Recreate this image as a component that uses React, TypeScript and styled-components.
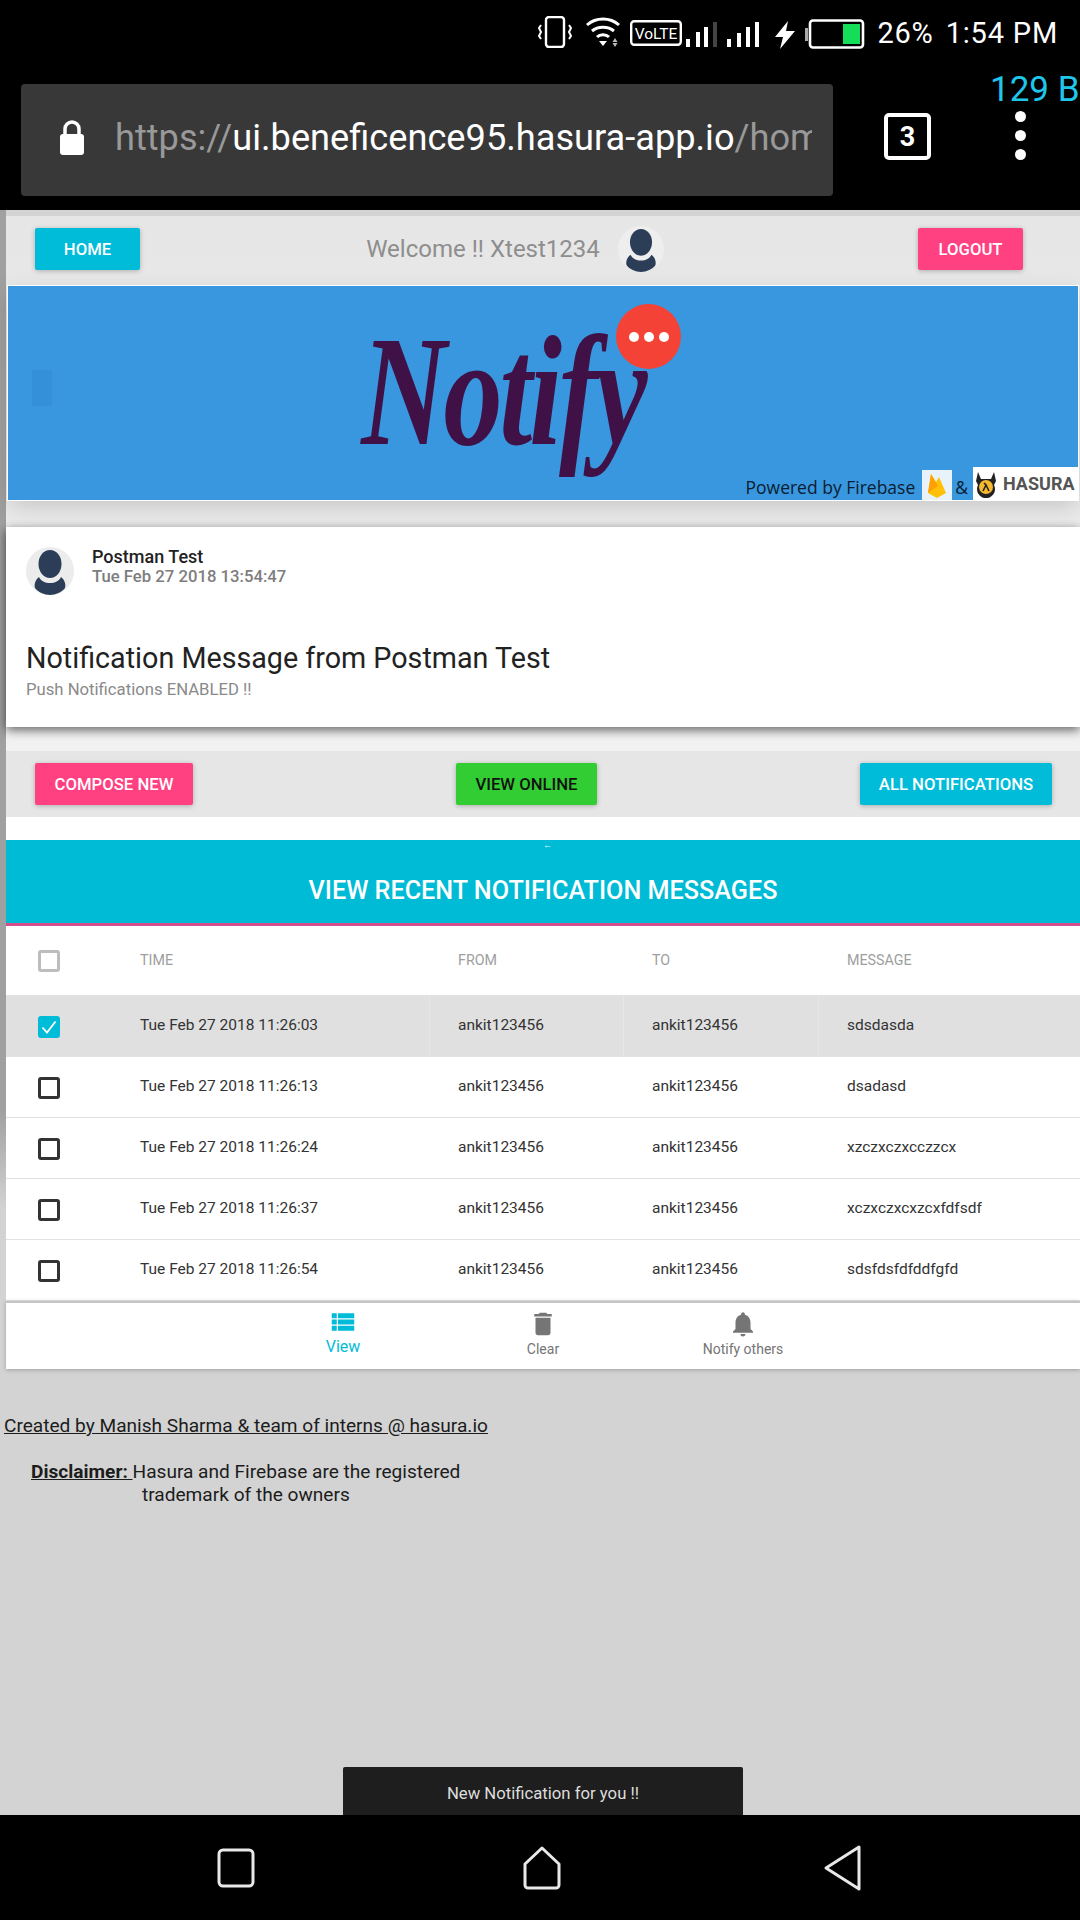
import React from 'react'
import styled, { createGlobalStyle } from 'styled-components'
import { MdDelete, MdNotifications, MdViewList } from 'react-icons/md'

const GlobalStyle = createGlobalStyle`
  html, body {
    margin: 0;
    padding: 0;
    background: #000;
    font-family: Roboto, "Liberation Sans", sans-serif;
  }
  * { box-sizing: border-box; }
`

const Screen = styled.div`
  position: relative;
  width: 1080px;
  height: 1920px;
  display: flex;
  flex-direction: column;
  overflow: hidden;
  background: #000;
`

const StatusBar = styled.div`
  height: 64px;
  padding: 16px 22px 0 0;
  display: flex;
  justify-content: flex-end;
  align-items: flex-start;
  color: #fff;
`

const StatusIcon = styled.svg<{ $ml?: number; $mt?: number }>`
  display: block;
  flex: none;
  margin-left: ${({ $ml }) => $ml ?? 0}px;
  margin-top: ${({ $mt }) => $mt ?? 0}px;
`

const StatusText = styled.span<{ $ml: number }>`
  margin-left: ${({ $ml }) => $ml}px;
  font-size: 29px;
  line-height: 34px;
  letter-spacing: 0.8px;
`

const Toolbar = styled.div`
  position: relative;
  height: 146px;
  padding: 20px 0 0 21px;
  display: flex;
  align-items: flex-start;
`

const UrlBar = styled.div`
  width: 812px;
  height: 112px;
  padding: 0 0 5px 38px;
  display: flex;
  align-items: center;
  gap: 30px;
  background: #383838;
  border-radius: 4px;
  overflow: hidden;
`

const LockIcon = styled.svg`
  display: block;
  flex: none;
`

const UrlText = styled.div`
  font-size: 36.2px;
  white-space: nowrap;
  color: #fff;
  width: 697px;
  overflow: hidden;
`

const UrlDim = styled.span`
  color: #999;
`

const TabCount = styled.div`
  width: 47px;
  height: 47px;
  margin: 29px 0 0 51px;
  border: 4px solid #fff;
  border-radius: 5px;
  display: flex;
  align-items: center;
  justify-content: center;
  color: #fff;
  font-size: 27px;
  font-weight: 700;
`

const MenuDots = styled.div`
  margin: 27px 0 0 84px;
  display: flex;
  flex-direction: column;
  gap: 8px;
`

const MenuDot = styled.span`
  width: 11px;
  height: 11px;
  border-radius: 50%;
  background: #fff;
`

const NetSpeed = styled.div`
  position: absolute;
  left: 990px;
  top: 6px;
  font-size: 35px;
  line-height: 40px;
  color: #1fc6ea;
  white-space: nowrap;
`

const Page = styled.div`
  position: relative;
  flex: 1;
  padding: 6px 0 0 6px;
  background:
    linear-gradient(#a0a0a0 0, #a0a0a0 900px, #d3d3d3 1000px) left top / 6px 100% no-repeat,
    #d3d3d3;
  overflow: hidden;
`

const HeaderArea = styled.div`
  background: linear-gradient(#e6e6e6, #ededed);
  height: 311px;
`

const HeaderRow = styled.div`
  height: 67px;
  padding: 12px 57px 0 29px;
  display: flex;
  align-items: flex-start;
  justify-content: space-between;
`

const Button = styled.div<{ $bg: string; $fg?: string; $w: number }>`
  width: ${({ $w }) => $w}px;
  height: 42px;
  flex: none;
  display: flex;
  align-items: center;
  justify-content: center;
  background: ${({ $bg }) => $bg};
  color: ${({ $fg }) => $fg ?? '#fff'};
  font-size: 16.7px;
  font-weight: 500;
  border-radius: 2px;
  box-shadow: 0 1px 5px rgba(0, 0, 0, 0.25);
`

const Welcome = styled.div`
  display: flex;
  align-items: center;
  gap: 18px;
  margin: -2px 28px 0 0;
  font-size: 24px;
  color: #8e8e8e;
`

const Avatar = styled.svg`
  display: block;
  flex: none;
`

const Banner = styled.div`
  position: relative;
  height: 214px;
  margin: 3px 2px 0;
  padding: 50px 80px 0 0;
  display: flex;
  justify-content: center;
  background: #3897de;
  box-shadow: 0 0 0 1px #fff, 0 8px 22px rgba(0, 0, 0, 0.16);
`

const LogoText = styled.div`
  font-family: "Liberation Serif", serif;
  font-style: italic;
  font-weight: 700;
  font-size: 118px;
  line-height: 140px;
  letter-spacing: -3px;
  color: #3f1147;
  transform: translateY(-10px) scaleY(1.32);
`

const LogoBubble = styled.div`
  position: absolute;
  left: 608px;
  top: 18px;
  width: 65px;
  height: 65px;
  display: flex;
  align-items: center;
  justify-content: center;
  gap: 5px;
  border-radius: 50%;
  background: #f44336;
`

const BubbleDot = styled.span`
  width: 10px;
  height: 10px;
  border-radius: 50%;
  background: #fff;
`

const FaintMark = styled.div`
  position: absolute;
  left: 24px;
  top: 84px;
  width: 20px;
  height: 36px;
  background: #3490d8;
`

const Powered = styled.div`
  position: absolute;
  right: 0;
  bottom: 0;
  display: flex;
  align-items: flex-end;
  font-family: "Open Sans", sans-serif;
  font-size: 17.5px;
  line-height: 26px;
  color: #0b1c33;
`

const FirebaseBox = styled.div`
  width: 30px;
  height: 30px;
  margin: 0 3px 0 7px;
  display: flex;
  align-items: center;
  justify-content: center;
  background: #e8f2fa;
`

const HasuraBox = styled.div`
  width: 105px;
  height: 33px;
  margin-left: 5px;
  display: flex;
  align-items: center;
  gap: 5px;
  padding-left: 1px;
  background: #fff;
  color: #555;
  font-family: Roboto, sans-serif;
  font-size: 18px;
  line-height: 33px;
  font-weight: 700;
  svg { flex: none; }
`

const MessageCard = styled.div`
  position: relative;
  height: 200px;
  padding: 20px 20px 0;
  background: #fff;
  box-shadow: 0 3px 10px rgba(0, 0, 0, 0.6);
`

const Sender = styled.div`
  display: flex;
  gap: 18px;
`

const SenderName = styled.div`
  font-size: 18px;
  line-height: 20px;
  font-weight: 500;
  color: #222;
`

const SenderDate = styled.div`
  font-size: 16.7px;
  line-height: 20px;
  font-weight: 500;
  color: #7d7d7d;
`

const MessageTitle = styled.div`
  margin-top: 45px;
  font-size: 28.7px;
  line-height: 36px;
  color: #222;
`

const MessageSub = styled.div`
  margin-top: 5px;
  font-size: 16.7px;
  line-height: 18px;
  color: #8a8a8a;
`

const CardGap = styled.div`
  height: 24px;
  background: #f2f2f2;
`

const ActionBar = styled.div`
  height: 66px;
  padding: 12px 28px 0 29px;
  display: flex;
  justify-content: space-between;
  align-items: flex-start;
  background: #e6e6e6;
`

const WhiteGap = styled.div`
  height: 23px;
  background: #fff;
`

const TableTitle = styled.div`
  position: relative;
  height: 86px;
  padding-top: 17px;
  display: flex;
  align-items: center;
  justify-content: center;
  background: #00bbd5;
  border-bottom: 3px solid #d64d8e;
  color: #fff;
  font-size: 25.2px;
  font-weight: 500;
`

const TinyArrow = styled.span`
  position: absolute;
  left: 537px;
  top: 0;
  font-size: 9px;
  line-height: 10px;
  color: #e6f9fc;
`

const Table = styled.div`
  background: #fff;
`

const Row = styled.div<{ $selected?: boolean; $head?: boolean }>`
  height: ${({ $head }) => ($head ? 70 : 61)}px;
  display: grid;
  grid-template-columns: 105px 318px 194px 195px 1fr;
  align-items: stretch;
  background: ${({ $selected }) => ($selected ? '#e0e0e0' : '#fff')};
  border-bottom: 1px solid #e2e2e2;
  font-size: ${({ $head }) => ($head ? 14.3 : 15.5)}px;
  color: ${({ $head }) => ($head ? '#9e9e9e' : '#333')};
`

const Cell = styled.div<{ $divider?: boolean }>`
  padding: 0 0 2px 28px;
  display: flex;
  align-items: center;
  border-left: 1px solid ${({ $divider }) => ($divider ? '#e6e6e6' : 'transparent')};
  white-space: nowrap;
`

const CheckCell = styled.div`
  padding: 1px 0 0 32px;
  display: flex;
  align-items: center;
`

const Checkbox = styled.div<{ $state: 'dim' | 'on' | 'off' }>`
  width: 22px;
  height: 22px;
  display: flex;
  align-items: center;
  justify-content: center;
  border-radius: 3px;
  border: 3px solid ${({ $state }) => ($state === 'dim' ? '#bdbdbd' : $state === 'on' ? '#00bcd9' : '#333')};
  background: ${({ $state }) => ($state === 'on' ? '#00bcd9' : 'transparent')};
`

const BottomNav = styled.div`
  height: 68px;
  border-top: 2px solid #c4c4c4;
  padding-top: 6px;
  display: flex;
  justify-content: center;
  background: #fff;
  box-shadow: 0 1px 4px rgba(0, 0, 0, 0.25);
`

const NavItem = styled.div<{ $active?: boolean }>`
  width: 200px;
  display: flex;
  flex-direction: column;
  align-items: center;
  color: ${({ $active }) => ($active ? '#00bcd9' : '#757575')};
  font-size: ${({ $active }) => ($active ? 16 : 14)}px;
  line-height: 18px;
`

const NavGlyph = styled.span<{ $active?: boolean }>`
  display: block;
  height: 30px;
  margin: ${({ $active }) => ($active ? '-2px 0 1px' : '0 0 1px')};
  svg { display: block; }
`

const Footer = styled.div`
  margin: 0 0 0 -2px;
  padding-top: 45px;
  font-size: 19.1px;
  line-height: 23px;
  color: #1c1c1c;
`

const Credit = styled.div`
  text-decoration: underline;
`

const Disclaimer = styled.div`
  margin: 23px 0 0 27px;
`

const DisclaimerLabel = styled.span`
  font-weight: 700;
  text-decoration: underline;
`

const DisclaimerRest = styled.div`
  padding-left: 111px;
`

const Toast = styled.div`
  position: absolute;
  left: 343px;
  bottom: 0;
  width: 400px;
  height: 48px;
  padding-top: 4px;
  display: flex;
  align-items: center;
  justify-content: center;
  background: #1e1e1e;
  border-radius: 2px 2px 0 0;
  color: #ddd;
  font-size: 16.7px;
`

const NavBar = styled.div`
  height: 105px;
  position: relative;
  display: flex;
  align-items: center;
  padding: 0 0 0 217px;
  background: #000;
`

const NavIcon = styled.svg<{ $ml?: number }>`
  display: block;
  flex: none;
  margin-left: ${({ $ml }) => $ml ?? 0}px;
`

const rows = [
  { time: '11:26:03', message: 'sdsdasda', selected: true },
  { time: '11:26:13', message: 'dsadasd' },
  { time: '11:26:24', message: 'xzczxczxcczzcx' },
  { time: '11:26:37', message: 'xczxczxcxzcxfdfsdf' },
  { time: '11:26:54', message: 'sdsfdsfdfddfgfd' },
]

const UserAvatar = ({ size, bg }: { size: number; bg: string }) => (
  <Avatar width={size} height={size} viewBox="0 0 48 48">
    <circle cx="24" cy="24" r="24" fill={bg} />
    <ellipse cx="24" cy="17" rx="11.5" ry="14" fill="#2c3e57" />
    <path d="M13 30c2 4 6 6 11 6s9-2 11-6c4 3 5 8 4 11-3 4-9 7-15 7s-12-3-15-7c-1-3 0-8 4-11z" fill="#2c3e57" />
  </Avatar>
)

const App = () => (
  <Screen>
    <GlobalStyle />
    <StatusBar>
      <StatusIcon width="34" height="32" viewBox="0 0 34 32">
        <rect x="8" y="1" width="18" height="30" rx="3" fill="none" stroke="#fff" strokeWidth="2.4" />
        <path d="M3 9l-2 3 2 4-2 4 2 3M31 9l2 3-2 4 2 4-2 3" fill="none" stroke="#fff" strokeWidth="2" />
      </StatusIcon>
      <StatusIcon $ml={14} width="36" height="32" viewBox="0 0 36 32">
        <path d="M1 9c9-8 23-8 32 0M6 15c6-5 16-5 22 0M11 21c3-3 9-3 12 0" fill="none" stroke="#fff" strokeWidth="3" />
        <path d="M13 25h8l-4 5z" fill="#fff" />
        <path d="M29 22l2.500 4h-5zM26.500 27h5l-2.500 4z" fill="#bbb" />
      </StatusIcon>
      <StatusIcon $ml={8} $mt={4} width="52" height="26" viewBox="0 0 52 26">
        <rect x="1.200" y="1.200" width="49.600" height="23.600" rx="3" fill="none" stroke="#fff" strokeWidth="2.4" />
        <text x="26" y="19" textAnchor="middle" fontSize="15.500" fill="#fff" fontFamily="Roboto, sans-serif">VoLTE</text>
      </StatusIcon>
      <StatusIcon $ml={4} $mt={6} width="34" height="26" viewBox="0 0 34 26">
        <rect x="0" y="17" width="4" height="8" fill="#fff" />
        <rect x="10" y="10" width="4" height="15" fill="#fff" />
        <rect x="18" y="5" width="4" height="20" fill="#fff" />
        <rect x="27" y="0" width="4" height="25" fill="#444" />
      </StatusIcon>
      <StatusIcon $ml={7} $mt={6} width="33" height="26" viewBox="0 0 33 26">
        <rect x="0" y="17" width="4" height="8" fill="#fff" />
        <rect x="10" y="11" width="4" height="14" fill="#fff" />
        <rect x="19" y="5" width="4" height="20" fill="#fff" />
        <rect x="28" y="0" width="4" height="25" fill="#fff" />
      </StatusIcon>
      <StatusIcon $ml={15} $mt={5} width="20" height="28" viewBox="0 0 20 28">
        <path d="M13 0L0 16h8l-3 12L20 10h-9z" fill="#fff" />
      </StatusIcon>
      <StatusIcon $ml={10} $mt={3} width="60" height="30" viewBox="0 0 60 30">
        <rect x="0" y="9" width="3" height="13" fill="#aaa" />
        <rect x="5" y="1.500" width="53" height="27" rx="3" fill="none" stroke="#fff" strokeWidth="2.6" />
        <rect x="38" y="5" width="17" height="20" fill="#14dd57" />
      </StatusIcon>
      <StatusText $ml={12}>26%</StatusText>
      <StatusText $ml={12}>1:54 PM</StatusText>
    </StatusBar>

    <Toolbar>
      <UrlBar>
        <LockIcon width="26" height="36" viewBox="0 0 26 36">
          <path d="M6 15V9a7 7 0 0 1 14 0v6" fill="none" stroke="#fff" strokeWidth="3.500" />
          <rect x="1" y="14" width="24" height="21" rx="3" fill="#fff" />
        </LockIcon>
        <UrlText>
          <UrlDim>https://</UrlDim>ui.beneficence95.hasura-app.io<UrlDim>/home</UrlDim>
        </UrlText>
      </UrlBar>
      <TabCount>3</TabCount>
      <MenuDots>
        <MenuDot />
        <MenuDot />
        <MenuDot />
      </MenuDots>
      <NetSpeed>129 B</NetSpeed>
    </Toolbar>

    <Page>
      <HeaderArea>
        <HeaderRow>
          <Button $bg="#00bcd9" $w={105}>HOME</Button>
          <Welcome>
            Welcome !! Xtest1234
            <UserAvatar size={46} bg="#eeeeee" />
          </Welcome>
          <Button $bg="#ff4081" $w={105}>LOGOUT</Button>
        </HeaderRow>
        <Banner>
          <FaintMark />
          <LogoText>Notify</LogoText>
          <LogoBubble>
            <BubbleDot />
            <BubbleDot />
            <BubbleDot />
          </LogoBubble>
          <Powered>
            Powered by Firebase
            <FirebaseBox>
              <svg width="20" height="28" viewBox="0 0 20 28">
                <path d="M1 22L4 3l5 8 3-5 7 16-9 5z" fill="#ffc107" />
                <path d="M1 22L4 3l7 12z" fill="#ffa000" />
              </svg>
            </FirebaseBox>
            &amp;
            <HasuraBox>
              <svg width="24" height="28" viewBox="0 0 24 28">
                <path d="M4 2l3 7h10l3-7 2 9-2 4a9 9 0 1 1-16 0l-2-4z" fill="#222" />
                <circle cx="12" cy="17" r="7" fill="#f5b82e" />
                <path d="M9 21l3-6 3 6M10 13l2 2" fill="none" stroke="#222" strokeWidth="1.600" />
              </svg>
              HASURA
            </HasuraBox>
          </Powered>
        </Banner>
      </HeaderArea>

      <MessageCard>
        <Sender>
          <UserAvatar size={48} bg="#ececec" />
          <div>
            <SenderName>Postman Test</SenderName>
            <SenderDate>Tue Feb 27 2018 13:54:47</SenderDate>
          </div>
        </Sender>
        <MessageTitle>Notification Message from Postman Test</MessageTitle>
        <MessageSub>Push Notifications ENABLED !!</MessageSub>
      </MessageCard>
      <CardGap />

      <ActionBar>
        <Button $bg="#ff4081" $w={158}>COMPOSE NEW</Button>
        <Button $bg="#32cd32" $fg="#111" $w={141}>VIEW ONLINE</Button>
        <Button $bg="#00bcd9" $w={192}>ALL NOTIFICATIONS</Button>
      </ActionBar>
      <WhiteGap />

      <TableTitle>
        <TinyArrow>←</TinyArrow>
        VIEW RECENT NOTIFICATION MESSAGES
      </TableTitle>

      <Table>
        <Row $head>
          <CheckCell>
            <Checkbox $state="dim" />
          </CheckCell>
          <Cell>TIME</Cell>
          <Cell>FROM</Cell>
          <Cell>TO</Cell>
          <Cell>MESSAGE</Cell>
        </Row>
        {rows.map(row => (
          <Row key={row.time} $selected={row.selected}>
            <CheckCell>
              <Checkbox $state={row.selected ? 'on' : 'off'}>
                {row.selected && (
                  <svg width="16" height="14" viewBox="0 0 16 14">
                    <path d="M1.500 7.500l4.500 5L14.500 1.500" fill="none" stroke="#fff" strokeWidth="1.800" />
                  </svg>
                )}
              </Checkbox>
            </CheckCell>
            <Cell>Tue Feb 27 2018 {row.time}</Cell>
            <Cell $divider={row.selected}>ankit123456</Cell>
            <Cell $divider={row.selected}>ankit123456</Cell>
            <Cell $divider={row.selected}>{row.message}</Cell>
          </Row>
        ))}
      </Table>

      <BottomNav>
        <NavItem $active>
          <NavGlyph $active>
            <MdViewList size={30} />
          </NavGlyph>
          View
        </NavItem>
        <NavItem>
          <NavGlyph>
            <MdDelete size={30} />
          </NavGlyph>
          Clear
        </NavItem>
        <NavItem>
          <NavGlyph>
            <MdNotifications size={30} />
          </NavGlyph>
          Notify others
        </NavItem>
      </BottomNav>

      <Footer>
        <Credit>Created by Manish Sharma &amp; team of interns @ hasura.io</Credit>
        <Disclaimer>
          <DisclaimerLabel>Disclaimer: </DisclaimerLabel>
          Hasura and Firebase are the registered
          <DisclaimerRest>trademark of the owners</DisclaimerRest>
        </Disclaimer>
      </Footer>

      <Toast>New Notification for you !!</Toast>
    </Page>

    <NavBar>
      <NavIcon width="38" height="40" viewBox="0 0 38 40">
        <rect x="2" y="2" width="34" height="36" rx="4" fill="none" stroke="#e8e8e8" strokeWidth="3" />
      </NavIcon>
      <NavIcon $ml={268} width="38" height="44" viewBox="0 0 38 44">
        <path d="M19 2L36 18v21a3 3 0 0 1-3 3H5a3 3 0 0 1-3-3V18z" fill="none" stroke="#e8e8e8" strokeWidth="3" strokeLinejoin="round" />
      </NavIcon>
      <NavIcon $ml={263} width="38" height="46" viewBox="0 0 38 46">
        <path d="M35 2v42L2 23z" fill="none" stroke="#e8e8e8" strokeWidth="3" strokeLinejoin="round" />
      </NavIcon>
    </NavBar>
  </Screen>
)

export default App
